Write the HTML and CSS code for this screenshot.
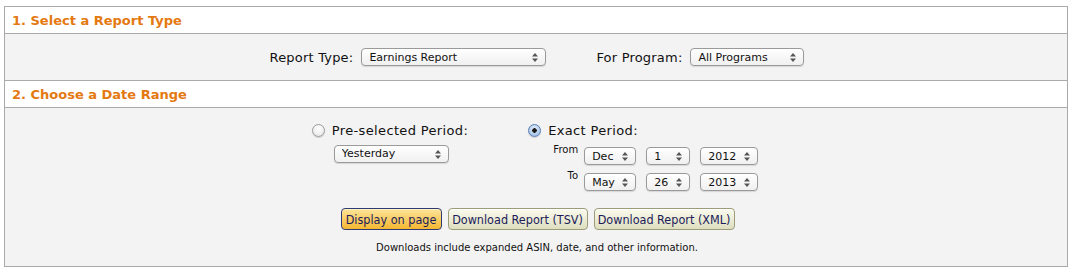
FILE: index.html
```html
<!DOCTYPE html>
<html lang="en">
<head>
  <meta charset="UTF-8">
  <title>Reports</title>
  <link rel="stylesheet" href="styles.css">
</head>
<body>
  <div class="report-box">
    <h2 class="step">1. Select a Report Type</h2>
    <div class="step-body type-row">
      <label class="field">
        <span class="field-label">Report Type:</span>
        <span class="sel sel-type">
          <select><option>Earnings Report</option></select>
          <svg class="arrows" width="6" height="9" viewBox="0 0 6 9"><path d="M3 0L6 3.5H0z M3 9L6 5.5H0z" fill="#555"/></svg>
        </span>
      </label>
      <label class="field">
        <span class="field-label">For Program:</span>
        <span class="sel sel-program">
          <select><option>All Programs</option></select>
          <svg class="arrows" width="6" height="9" viewBox="0 0 6 9"><path d="M3 0L6 3.5H0z M3 9L6 5.5H0z" fill="#555"/></svg>
        </span>
      </label>
    </div>

    <h2 class="step">2. Choose a Date Range</h2>
    <div class="step-body date-body">
      <div class="periods">
        <div class="period">
          <label class="radio-line"><input type="radio" name="period"> Pre-selected Period:</label>
          <div class="period-inner">
            <span class="sel sel-preset">
              <select><option>Yesterday</option></select>
              <svg class="arrows" width="6" height="9" viewBox="0 0 6 9"><path d="M3 0L6 3.5H0z M3 9L6 5.5H0z" fill="#555"/></svg>
            </span>
          </div>
        </div>
        <div class="period">
          <label class="radio-line"><input type="radio" name="period" checked> Exact Period:</label>
          <div class="period-inner exact-grid">
            <span class="range-label">From</span>
            <span class="sel sel-month"><select><option>Dec</option></select><svg class="arrows" width="6" height="9" viewBox="0 0 6 9"><path d="M3 0L6 3.5H0z M3 9L6 5.5H0z" fill="#555"/></svg></span>
            <span class="sel sel-day"><select><option>1</option></select><svg class="arrows" width="6" height="9" viewBox="0 0 6 9"><path d="M3 0L6 3.5H0z M3 9L6 5.5H0z" fill="#555"/></svg></span>
            <span class="sel sel-year"><select><option>2012</option></select><svg class="arrows" width="6" height="9" viewBox="0 0 6 9"><path d="M3 0L6 3.5H0z M3 9L6 5.5H0z" fill="#555"/></svg></span>
            <span class="range-label">To</span>
            <span class="sel sel-month"><select><option>May</option></select><svg class="arrows" width="6" height="9" viewBox="0 0 6 9"><path d="M3 0L6 3.5H0z M3 9L6 5.5H0z" fill="#555"/></svg></span>
            <span class="sel sel-day"><select><option>26</option></select><svg class="arrows" width="6" height="9" viewBox="0 0 6 9"><path d="M3 0L6 3.5H0z M3 9L6 5.5H0z" fill="#555"/></svg></span>
            <span class="sel sel-year"><select><option>2013</option></select><svg class="arrows" width="6" height="9" viewBox="0 0 6 9"><path d="M3 0L6 3.5H0z M3 9L6 5.5H0z" fill="#555"/></svg></span>
          </div>
        </div>
      </div>

      <div class="actions">
        <button class="btn btn-primary">Display on page</button>
        <button class="btn">Download Report (TSV)</button>
        <button class="btn">Download Report (XML)</button>
      </div>
      <p class="note">Downloads include expanded ASIN, date, and other information.</p>
    </div>
  </div>
</body>
</html>
```

FILE: styles.css
```css
body {
  margin: 6px 4px;
  padding: 0;
  font-family: "DejaVu Sans", Verdana, sans-serif;
  color: #111;
  background: #fff;
}

.report-box {
  border: 1px solid #a9a9a9;
}

.step {
  margin: 0;
  height: 26px;
  line-height: 27px;
  padding-left: 7px;
  font-size: 13px;
  font-weight: bold;
  color: #e47911;
  background: #fff;
  border-bottom: 1px solid #a9a9a9;
}

.step-body {
  background: #f3f3f3;
}

.step-body + .step {
  border-top: 1px solid #a9a9a9;
}

.type-row {
  height: 46px;
  display: flex;
  justify-content: center;
  align-items: center;
  gap: 50px;
  padding-left: 2px;
}

.field {
  display: flex;
  align-items: center;
  gap: 8px;
}

.field-label {
  font-size: 13px;
  letter-spacing: 0.2px;
}

/* mac style select */
.sel {
  position: relative;
  display: inline-block;
}
.sel select {
  appearance: none;
  -webkit-appearance: none;
  display: block;
  height: 18px;
  width: 100%;
  margin: 0;
  padding: 0 0 0 7px;
  font-family: "DejaVu Sans", sans-serif;
  font-size: 11px;
  color: #111;
  border: 1px solid #9a9a9a;
  border-radius: 4px;
  background: linear-gradient(#ffffff, #f0f0f0);
  box-shadow: 0 1px 1px rgba(0,0,0,0.12);
}
.sel .arrows {
  position: absolute;
  right: 8px;
  top: 5px;
  pointer-events: none;
}

.sel-type { width: 185px; }
.sel-program { width: 114px; }
.sel-preset { width: 115px; }
.sel-month { width: 52px; }
.sel-day { width: 44px; }
.sel-year { width: 58px; }

.date-body {
  padding-top: 14px;
  height: 144px;
}

.periods {
  display: flex;
  justify-content: center;
  gap: 60px;
  padding-right: 2px;
}

.radio-line {
  display: flex;
  align-items: center;
  gap: 7px;
  font-size: 13px;
  height: 16px;
  letter-spacing: 0.35px;
}

.radio-line input {
  appearance: none;
  -webkit-appearance: none;
  width: 13px;
  height: 13px;
  margin: 0;
  border: 1px solid #9c9c9c;
  border-radius: 50%;
  background: radial-gradient(circle at 50% 35%, #ffffff, #e2e2e2);
  box-shadow: 0 1px 1px rgba(0,0,0,0.15);
}
.radio-line input:checked {
  border-color: #5a7fb7;
  background: radial-gradient(circle, #1a1a1a 0 2px, transparent 2.5px),
              radial-gradient(circle at 50% 35%, #e6f0fb, #8fb3e0);
}

.period-inner {
  padding-left: 22px;
  margin-top: 4px;
}

.exact-grid {
  display: grid;
  grid-template-columns: 26px auto auto auto;
  column-gap: 10px;
  row-gap: 8px;
  padding-left: 20px;
  margin-top: 9px;
}
.exact-grid .range-label {
  font-size: 10px;
  text-align: right;
  margin-right: -4px;
  margin-top: -3px;
}

.actions {
  display: flex;
  justify-content: center;
  gap: 6px;
  margin-top: 17px;
  padding-left: 3px;
}

.btn {
  height: 22px;
  padding: 0 2px;
  white-space: nowrap;
  font-family: "DejaVu Sans", sans-serif;
  font-stretch: condensed;
  font-size: 12.5px;
  color: #1c1c5a;
  border: 1px solid #9c9c7a;
  border-radius: 4px;
  background: linear-gradient(#fbfbee, #dedec0);
  box-shadow: inset 0 1px 0 #fff;
  cursor: pointer;
}
.btn:first-child { width: 101px; }
.btn:nth-child(2) { width: 140px; }
.btn:nth-child(3) { width: 141px; }

.btn-primary {
  border-color: #2e3b72;
  background: linear-gradient(#fde49a, #f4b731);
  box-shadow: inset 0 1px 0 #fff3c4;
}

.note {
  margin: 12px 0 0;
  text-align: center;
  font-size: 10px;
  padding-left: 2px;
}
```
